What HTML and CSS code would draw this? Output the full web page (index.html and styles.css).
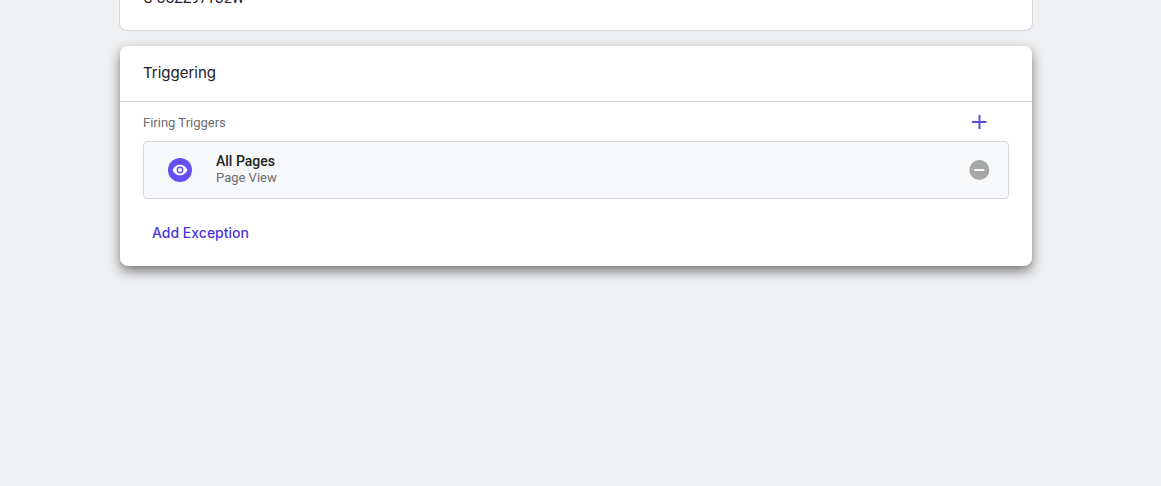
FILE: index.html
```
<!DOCTYPE html>
<html lang="en">
<head>
<meta charset="utf-8">
<meta name="viewport" content="width=device-width, initial-scale=1">
<title>Triggering</title>
<link rel="stylesheet" href="styles.css">
</head>
<body>
<main class="page">
  <section class="card card-outlined">
    <p class="tag-id">G-UUZZ97YU2W</p>
  </section>
  <section class="card card-raised">
    <header class="card-header">
      <h2 class="card-title">Triggering</h2>
    </header>
    <div class="card-body">
      <div class="section-row">
        <h3 class="section-label">Firing Triggers</h3>
        <button class="icon-button" type="button" aria-label="Add trigger">
          <svg width="24" height="24" viewBox="0 0 24 24" aria-hidden="true"><path fill="#5a4ee0" d="M19.500 13h-6v6h-2v-6H5v-2h6.500V5h2v6h6z"/></svg>
        </button>
      </div>
      <div class="trigger">
        <svg class="trigger-icon" width="24" height="24" viewBox="0 0 24 24" aria-hidden="true">
          <circle cx="12" cy="12" r="12" fill="#664ef5"/>
          <path fill="#fff" d="M12 6.700C8.700 6.700 5.800 8.900 4.600 12c1.200 3.100 4.100 5.300 7.400 5.300s6.200-2.200 7.400-5.300C18.200 8.900 15.300 6.700 12 6.700z"/>
          <circle cx="12" cy="12" r="3.400" fill="#664ef5"/>
          <circle cx="12" cy="12" r="2" fill="#fff"/>
        </svg>
        <div class="trigger-text">
          <span class="trigger-name">All Pages</span>
          <span class="trigger-type">Page View</span>
        </div>
        <button class="icon-button" type="button" aria-label="Remove trigger">
          <svg width="24" height="24" viewBox="0 0 24 24" aria-hidden="true"><circle cx="12.400" cy="12" r="10" fill="#a5a7a6"/><path fill="#fff" d="M7.400 11h10v2h-10z"/></svg>
        </button>
      </div>
      <button class="text-button" type="button">Add Exception</button>
    </div>
  </section>
</main>
</body>
</html>
```
FILE: styles.css
```
* {
  box-sizing: border-box;
}

body {
  margin: 0;
  background: #eff0f2;
  color: #202124;
  font-family: Roboto, "Noto Sans", sans-serif;
}

button {
  border: 0;
  padding: 0;
  background: none;
  font-family: inherit;
  cursor: pointer;
}

.page {
  display: flex;
  flex-direction: column;
  gap: 15px;
  margin-top: -11px;
  padding: 0 129px 40px 120px;
}

.card {
  background: #fff;
  border-radius: 8px;
}

.card-outlined {
  margin: 0 -1px;
  padding: 0 23px 23px;
  border: 1px solid #d5d6de;
  border-top: 0;
  border-radius: 0 0 8px 8px;
}

.tag-id {
  margin: 0;
  font-size: 14px;
  line-height: 18px;
}

.card-raised {
  box-shadow: 0 5px 12px rgba(0, 0, 0, 0.5);
}

.card-header {
  padding: 15px 23px 16px;
  border-bottom: 1px solid #d0d1d3;
}

.card-title {
  margin: 0;
  font-family: Inter, Roboto, sans-serif;
  font-size: 15px;
  font-weight: 400;
  line-height: 24px;
}

.card-body {
  padding: 8px 23px 15px;
}

.section-row {
  display: flex;
  align-items: center;
  justify-content: space-between;
  padding-right: 18px;
}

.section-label {
  margin: 0;
  color: #6c6d70;
  font-size: 13px;
  font-weight: 400;
}

.icon-button {
  display: flex;
}

.trigger {
  display: flex;
  align-items: center;
  gap: 24px;
  margin-top: 7px;
  padding: 10px 17px 12px 24px;
  border: 1px solid #d5d6de;
  border-radius: 4px;
  background: #f7f8fa;
}

.trigger-icon {
  margin-top: 2px;
}

.trigger .icon-button {
  margin-top: 2px;
}

.trigger-text {
  display: flex;
  flex: 1;
  flex-direction: column;
}

.trigger-name {
  font-size: 14px;
  font-weight: 500;
  line-height: 18px;
}

.trigger-type {
  color: #6c6d70;
  font-size: 13px;
  line-height: 16px;
}

.text-button {
  margin-top: 16px;
  padding: 0 9px;
  color: #4a34dc;
  font-family: Inter, Roboto, sans-serif;
  font-size: 14px;
  font-weight: 500;
  line-height: 36px;
}
```
